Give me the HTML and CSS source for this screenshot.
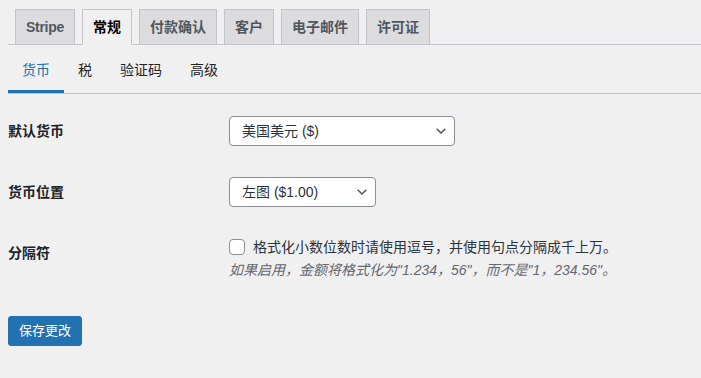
FILE: index.html
```html
<!DOCTYPE html>
<html lang="zh-CN">
<head>
  <meta charset="UTF-8" />
  <meta name="viewport" content="width=device-width, initial-scale=1.0"/>
  <title>设置 - 常规</title>
  <link rel="stylesheet" href="styles.css">
</head>
<body>

<div class="wrap">
  <nav class="nav-tabs">
    <a href="#" class="nav-tab brand">Stripe</a>
    <a href="#" class="nav-tab active">常规</a>
    <a href="#" class="nav-tab">付款确认</a>
    <a href="#" class="nav-tab">客户</a>
    <a href="#" class="nav-tab">电子邮件</a>
    <a href="#" class="nav-tab">许可证</a>
  </nav>

  <nav class="subnav">
    <a href="#" class="current">货币</a>
    <a href="#">税</a>
    <a href="#">验证码</a>
    <a href="#">高级</a>
  </nav>

  <form class="settings" onsubmit="return false">
    <div class="fields">
      <div class="field">
        <label class="field-label" for="currency">默认货币</label>
        <div class="field-input">
          <span class="select-wrap wide">
            <select id="currency">
              <option>美国美元 ($)</option>
            </select>
            <svg class="chevron" width="10" height="6" viewBox="0 0 10 6"><path d="M0.7 0.7 L5 5 L9.3 0.7" fill="none" stroke="#50575e" stroke-width="1.5"/></svg>
          </span>
        </div>
      </div>

      <div class="field">
        <label class="field-label" for="position">货币位置</label>
        <div class="field-input">
          <span class="select-wrap narrow">
            <select id="position">
              <option>左图 ($1.00)</option>
            </select>
            <svg class="chevron" width="10" height="6" viewBox="0 0 10 6"><path d="M0.7 0.7 L5 5 L9.3 0.7" fill="none" stroke="#50575e" stroke-width="1.5"/></svg>
          </span>
        </div>
      </div>

      <div class="field">
        <label class="field-label" for="separator">分隔符</label>
        <div class="field-input">
          <label class="check">
            <input type="checkbox" id="separator">
            格式化小数位数时请使用逗号，并使用句点分隔成千上万。
          </label>
          <p class="description">如果启用，金额将格式化为"1.234，56"，而不是"1，234.56"。</p>
        </div>
      </div>
    </div>

    <p class="submit">
      <button type="submit" class="button-primary">保存更改</button>
    </p>
  </form>
</div>

</body>
</html>
```

FILE: styles.css
```css
* { box-sizing: border-box; }
body {
  margin: 0;
  background: #f0f0f1;
  color: #3c434a;
  font-family: "Liberation Sans", "Noto Sans CJK SC", sans-serif;
  font-size: 14px;
}
.wrap {
  padding-left: 8px;
}
.nav-tabs {
  display: flex;
  padding-top: 9px;
  border-bottom: 1px solid #c3c4c7;
}
.nav-tab {
  margin-left: 7px;
  margin-bottom: -1px;
  padding: 5px 10px;
  font-size: 14px;
  line-height: 24px;
  font-weight: 600;
  color: #50575e;
  background: #dcdcde;
  border: 1px solid #c3c4c7;
  text-decoration: none;
}
.nav-tab.brand {
  letter-spacing: -0.3px;
}
.nav-tab.active {
  color: #000;
  background: #f0f0f1;
  border-bottom-color: #f0f0f1;
}
.subnav {
  display: flex;
  padding-top: 13px;
  border-bottom: 1px solid #c3c4c7;
}
.subnav a {
  padding: 0 14px 8px;
  line-height: 24px;
  color: #1d2327;
  text-decoration: none;
  border-bottom: 3px solid transparent;
}
.subnav a.current {
  color: #2271b1;
  border-bottom-color: #2271b1;
}
.settings {
  padding-top: 22px;
}
.fields {
  display: flex;
  flex-direction: column;
  gap: 31px;
}
.field {
  display: grid;
  grid-template-columns: 221px 1fr;
  align-items: start;
}
.field-label {
  padding-top: 6px;
  line-height: 18px;
  font-weight: 600;
  color: #1d2327;
}
.select-wrap {
  position: relative;
  display: inline-block;
}
.select-wrap.wide { width: 226px; }
.select-wrap.narrow { width: 147px; }
.select-wrap select {
  appearance: none;
  -webkit-appearance: none;
  display: block;
  width: 100%;
  height: 30px;
  margin: 0;
  padding: 0 24px 0 12px;
  font: inherit;
  font-size: 14px;
  color: #2c3338;
  background: #fff;
  border: 1px solid #8c8f94;
  border-radius: 4px;
}
.chevron {
  position: absolute;
  right: 9px;
  top: 12px;
  pointer-events: none;
}
.check {
  display: flex;
  align-items: center;
  gap: 8px;
  line-height: 18px;
  color: #2c3338;
}
.check input {
  appearance: none;
  -webkit-appearance: none;
  width: 16px;
  height: 16px;
  margin: 0;
  background: #fff;
  border: 1px solid #8c8f94;
  border-radius: 4px;
}
.description {
  margin: 5px 0 0;
  line-height: 18px;
  font-size: 14px;
  font-style: italic;
  color: #646970;
}
.submit {
  margin: 37px 0 0;
}
.button-primary {
  height: 30px;
  padding: 0 10px;
  font: inherit;
  font-size: 13px;
  line-height: 28px;
  color: #fff;
  background: #2271b1;
  border: 1px solid #2271b1;
  border-radius: 3px;
  cursor: pointer;
}
```
